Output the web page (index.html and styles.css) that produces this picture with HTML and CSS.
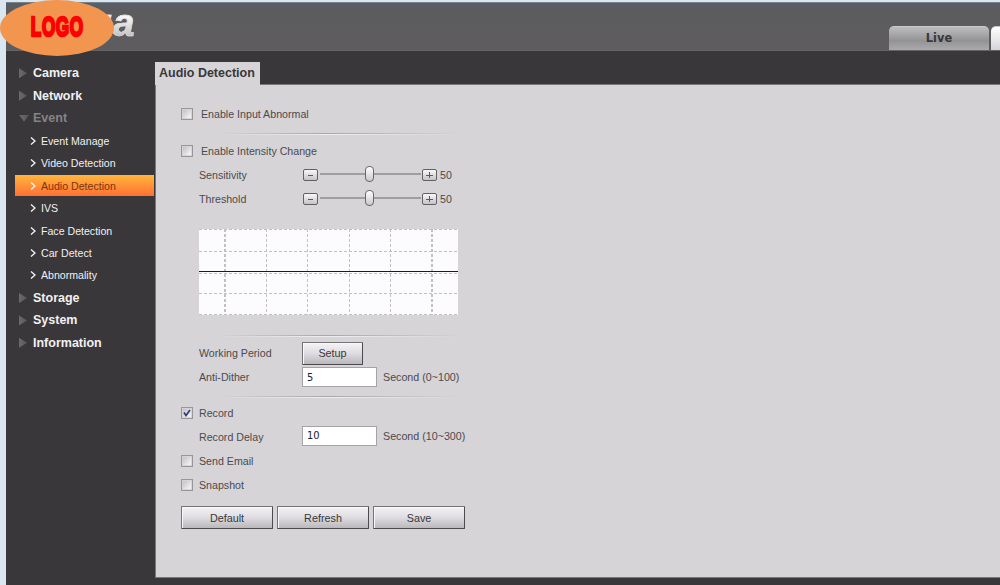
FILE: index.html
```
<!DOCTYPE html>
<html lang="en">
<head>
    <meta charset="UTF-8">
    <title>Audio Detection</title>
    <link rel="stylesheet" href="styles.css">
</head>
<body>
    <div class="page">
        <div class="header">
            <div class="brand">ua</div>
            <div class="logo"><span>LOGO</span></div>
            <div class="tabs">
                <div class="tab">Live</div>
                <div class="tab tab-next"></div>
            </div>
        </div>
        <div class="main">
            <ul class="menu">
                <li class="group">Camera</li>
                <li class="group">Network</li>
                <li class="group open">Event</li>
                <li class="item"><svg width="6" height="8"><path d="M1 .5 5 4 1 7.5"/></svg>Event Manage</li>
                <li class="item"><svg width="6" height="8"><path d="M1 .5 5 4 1 7.5"/></svg>Video Detection</li>
                <li class="item active"><svg width="6" height="8"><path d="M1 .5 5 4 1 7.5"/></svg>Audio Detection</li>
                <li class="item"><svg width="6" height="8"><path d="M1 .5 5 4 1 7.5"/></svg>IVS</li>
                <li class="item"><svg width="6" height="8"><path d="M1 .5 5 4 1 7.5"/></svg>Face Detection</li>
                <li class="item"><svg width="6" height="8"><path d="M1 .5 5 4 1 7.5"/></svg>Car Detect</li>
                <li class="item"><svg width="6" height="8"><path d="M1 .5 5 4 1 7.5"/></svg>Abnormality</li>
                <li class="group">Storage</li>
                <li class="group">System</li>
                <li class="group">Information</li>
            </ul>
            <div class="content">
                <div class="title">Audio Detection</div>
                <form class="panel">
                    <label class="row wide"><input type="checkbox">Enable Input Abnormal</label>
                    <div class="line first"></div>
                    <label class="row wide"><input type="checkbox">Enable Intensity Change</label>
                    <div class="row">
                        <span class="label">Sensitivity</span>
                        <div class="slider"><i class="step"></i><div class="track"><b class="knob"></b></div><i class="step plus"></i></div>
                        <span class="value">50</span>
                    </div>
                    <div class="row">
                        <span class="label">Threshold</span>
                        <div class="slider"><i class="step"></i><div class="track"><b class="knob"></b></div><i class="step plus"></i></div>
                        <span class="value">50</span>
                    </div>
                    <svg class="chart" width="259" height="86">
                        <rect width="259" height="86" fill="#fcfbfd"/>
                        <path class="grid" d="M0 .5H259M0 22.5H259M0 44.5H259M0 64.5H259M0 85.5H259M67.5 0V86M108.5 0V86M150.5 0V86M191.5 0V86"/>
                        <path class="grid bold" d="M26 0V86M233 0V86"/>
                        <path d="M0 42.5H259" stroke="#1d1b1e"/>
                    </svg>
                    <div class="line second"></div>
                    <div class="row period">
                        <span class="label">Working Period</span>
                        <button type="button" class="setup">Setup</button>
                    </div>
                    <div class="row">
                        <span class="label">Anti-Dither</span>
                        <input type="text" value="5">
                        <span class="hint">Second (0~100)</span>
                    </div>
                    <div class="line third"></div>
                    <label class="row"><input type="checkbox"><svg class="tick" width="12" height="12"><path d="M3 5.5 5 8.5 9 3"/></svg>Record</label>
                    <div class="row delay">
                        <span class="label">Record Delay</span>
                        <input type="text" value="10">
                        <span class="hint">Second (10~300)</span>
                    </div>
                    <label class="row"><input type="checkbox">Send Email</label>
                    <label class="row"><input type="checkbox">Snapshot</label>
                    <div class="buttons">
                        <button type="button">Default</button>
                        <button type="button">Refresh</button>
                        <button type="button">Save</button>
                    </div>
                </form>
            </div>
        </div>
    </div>
</body>
</html>
```
FILE: styles.css
```
* {
    box-sizing: border-box;
}
body {
    margin: 0;
    height: 585px;
    overflow: hidden;
    background-color: #dae6f0;
    font-family: "Liberation Sans", Arial, sans-serif;
    font-size: 10.65px;
    color: #4c4a4d;
}
.page {
    margin-left: 6px;
    padding-top: 2px;
}
.header {
    position: relative;
    height: 49px;
    background: linear-gradient(#55606a 0, #5c5b5e 6px, #5e5c5f 100%);
    border-top: 1px solid #75808a;
    border-bottom: 1px solid #656366;
}
.brand {
    position: absolute;
    left: 82px;
    top: -1px;
    padding-right: 4px;
    font-size: 39px;
    line-height: 42px;
    font-weight: bold;
    font-style: italic;
    letter-spacing: 1px;
    color: transparent;
    background: linear-gradient(#f6f6f6 35%, #c4c3c5 80%);
    background-clip: text;
    -webkit-background-clip: text;
    -webkit-text-stroke: 0.6px #dddcde;
}
.logo {
    position: absolute;
    left: -6px;
    top: -3px;
    width: 114px;
    height: 56px;
    border-radius: 50%;
    background-color: #f2954f;
    display: flex;
    align-items: center;
    justify-content: center;
    z-index: 1;
}
.logo span {
    font-size: 28px;
    line-height: 28px;
    font-weight: bold;
    letter-spacing: 1px;
    color: #fe0000;
    -webkit-text-stroke: 2.6px #fe0000;
    transform: translateY(-1px) scaleX(0.61);
}
.tabs {
    display: flex;
    gap: 2px;
    height: 100%;
    padding: 23px 0 0 883px;
    overflow: hidden;
}
.tab {
    flex: none;
    width: 100px;
    border-radius: 5px 5px 0 0;
    background: linear-gradient(#bdbcbe, #939294 60%, #aaa9ab);
    border-top: 1px solid #c9c8ca;
    color: #39373a;
    font-family: "DejaVu Sans", sans-serif;
    font-size: 11.4px;
    font-weight: bold;
    line-height: 23px;
    text-align: center;
}
.tab-next {
    background: linear-gradient(#fff, #d6d4d7);
}
.main {
    display: flex;
    height: 534px;
    background-color: #39373a;
}
.menu {
    width: 149px;
    margin: 0;
    padding: 11px 0 0 9px;
    list-style: none;
}
.menu li {
    display: flex;
    align-items: center;
    height: 22.48px;
}
.group {
    font-size: 12.5px;
    font-weight: bold;
    color: #f1f0f2;
}
.group::before {
    content: "";
    width: 8px;
    height: 10px;
    margin: 0 6px 0 4px;
    background: linear-gradient(90deg, #6c6a6d, #59575a);
    clip-path: polygon(0 0, 100% 50%, 0 100%);
}
.group.open {
    color: #858386;
}
.group.open::before {
    width: 10px;
    height: 7px;
    margin: 0 4px;
    clip-path: polygon(0 0, 100% 0, 50% 100%);
}
.item {
    padding-left: 15px;
    font-size: 10.6px;
    color: #f1f0f2;
}
.item svg {
    margin-right: 5px;
    fill: none;
    stroke: #f1f0f2;
    stroke-width: 1.4;
}
.item.active {
    color: #7a3510;
    background: linear-gradient(#ffb63c, #ff7034) 0 1px / 139px 21px no-repeat;
}
.content {
    flex: 1;
    padding-top: 11px;
}
.title {
    position: relative;
    width: 105px;
    height: 23px;
    margin-bottom: -1px;
    padding-left: 4px;
    background-color: #d6d4d7;
    color: #39373a;
    font-size: 12.5px;
    font-weight: bold;
    line-height: 23px;
    white-space: nowrap;
}
.panel {
    height: 494px;
    margin: 0;
    padding: 17px 0 0 25px;
    background-color: #d6d4d7;
    border: solid #79777a;
    border-width: 1px 0 1px 1px;
}
.row {
    position: relative;
    display: flex;
    align-items: center;
    height: 24px;
}
.row .label {
    width: 103px;
    margin-left: 18px;
}
input[type="checkbox"] {
    appearance: none;
    width: 12px;
    height: 12px;
    margin: 0 6px 0 0;
    border: 1px solid #98969a;
    background: linear-gradient(135deg, #c3c1c4, #f8f7f9) content-box #f4f3f5;
    padding: 1px;
}
.wide input[type="checkbox"] {
    margin-right: 8px;
}
.tick {
    position: absolute;
    left: 0;
    fill: none;
    stroke: #2f4077;
    stroke-width: 1.7;
}
.line {
    width: 270px;
    height: 2px;
    margin-left: 10px;
    background: linear-gradient(90deg, transparent 10%, #a9a7aa 50%, transparent) 0 0 / 100% 1px no-repeat,
        linear-gradient(90deg, transparent 10%, #efeef0 50%, transparent) 0 1px / 100% 1px no-repeat;
}
.first {
    margin-top: 7px;
    margin-bottom: 4px;
}
.second {
    margin-top: 20px;
}
.third {
    margin-top: 7px;
    margin-bottom: 3px;
}
.slider {
    display: flex;
    align-items: center;
    width: 134px;
    margin-left: 1px;
}
.step {
    flex: none;
    width: 15px;
    height: 12px;
    border: 1px solid #626063;
    border-radius: 2px;
    background: linear-gradient(#5c5a5d, #5c5a5d) center / 5px 1px no-repeat, linear-gradient(#f8f7f9, #c5c3c6);
}
.step.plus {
    background: linear-gradient(#5c5a5d, #5c5a5d) center / 7px 1px no-repeat, linear-gradient(#5c5a5d, #5c5a5d) center / 1px 6px no-repeat, linear-gradient(#f8f7f9, #c5c3c6);
}
.track {
    flex: 1;
    display: flex;
    align-items: center;
    justify-content: center;
    height: 16px;
    margin: -2px 1px 0 2px;
    background: linear-gradient(#a09ea1, #a09ea1) center / 100% 2px no-repeat;
}
.knob {
    width: 9px;
    height: 16px;
    margin-right: 3px;
    border: 1px solid #69676a;
    border-radius: 4px;
    background: linear-gradient(#fff, #c9c7ca);
}
.value {
    margin-left: 3px;
}
.chart {
    display: block;
    margin: 18px 0 0 18px;
}
.grid {
    stroke: #c2c0c3;
    stroke-dasharray: 3 2;
}
.grid.bold {
    stroke-width: 2;
}
input[type="text"] {
    width: 75px;
    height: 20px;
    padding: 0 4px;
    border: 1px solid #a5a3a6;
    background-color: #fff;
    color: #222;
    font-family: "DejaVu Sans Condensed", "DejaVu Sans", sans-serif;
    font-size: 11px;
}
.hint {
    margin-left: 6px;
    font-size: 10.7px;
}
button {
    width: 92px;
    height: 23px;
    padding: 0;
    border: 1px solid #757376;
    border-right-color: #4c4a4d;
    border-bottom-color: #4c4a4d;
    border-radius: 1px;
    background: linear-gradient(#f4f3f5, #dedce0 50%, #bab8bb);
    box-shadow: inset 1px 1px #f8f7f9;
    color: #39373a;
    font-family: inherit;
    font-size: 10.8px;
}
.setup {
    width: 61px;
}
.period {
    margin-top: 4px;
}
.delay input,
.delay .hint {
    margin-top: -3px;
}
.buttons {
    display: flex;
    gap: 4px;
    margin-top: 9px;
}
```
